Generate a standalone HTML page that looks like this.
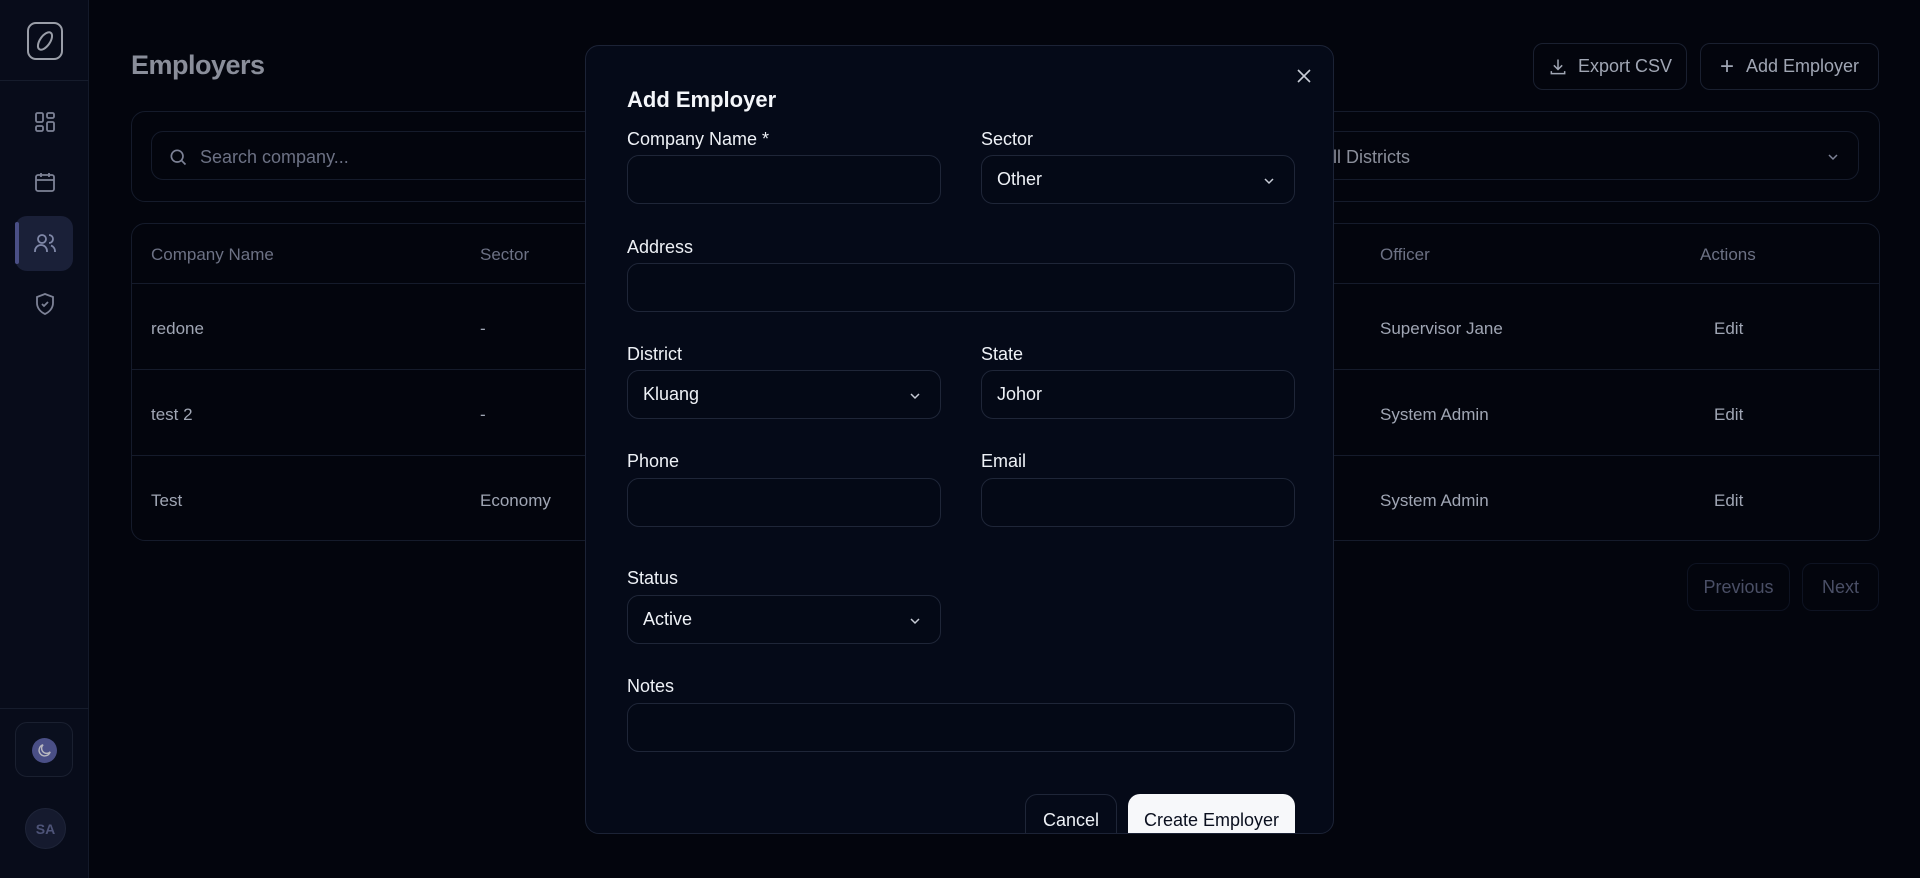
<!DOCTYPE html>
<html><head><meta charset="utf-8"><style>
*{box-sizing:border-box;margin:0;padding:0}
body{width:1920px;height:878px;overflow:hidden;background:#03050d;font-family:"Liberation Sans",sans-serif;position:relative;color:#9aa0b0}
.abs{position:absolute}
.side{left:0;top:0;width:89px;height:878px;background:#080c1a;border-right:1px solid #141a2a}
.hline{left:0;width:89px;height:1px;background:#161c2c}
.ico{position:absolute;left:33px;width:24px;height:24px}
.card{border:1px solid #151b2b;border-radius:14px}
.btn{border:1px solid #1a2030;border-radius:10px;display:flex;align-items:center;justify-content:center;font-size:18px;color:#a0a6b4}
.th{font-size:17px;color:#6c7184}
.td{font-size:17px;color:#a0a6b4}
.modal{left:585px;top:45px;width:749px;height:789px;background:#050a18;border:1px solid #1c2336;border-radius:14px;overflow:hidden}
.lbl{position:absolute;font-size:18px;color:#eef1f6}
.inp{position:absolute;height:49px;border:1px solid #1f2638;border-radius:12px;background:#040916;font-size:18px;color:#eef1f6;padding-left:15px;display:flex;align-items:center}
.chev{position:absolute;right:18px;top:18px}
</style></head><body>
<div class="abs side">
 <div class="abs" style="left:27px;top:22px;width:36px;height:38px;border:2px solid #9a9ea8;border-radius:9px"><svg width="32" height="34" viewBox="0 0 32 34"><ellipse cx="16" cy="17" rx="5" ry="10" transform="rotate(35 16 17)" fill="none" stroke="#9a9ea8" stroke-width="2"/></svg></div>
 <div class="abs hline" style="top:80px"></div>
 <svg class="ico" style="top:110px" viewBox="0 0 24 24" fill="none" stroke="#7d8296" stroke-width="1.8"><rect x="3" y="3" width="7" height="9" rx="1.5"/><rect x="14" y="3" width="7" height="5" rx="1.5"/><rect x="14" y="12" width="7" height="9" rx="1.5"/><rect x="3" y="16" width="7" height="5" rx="1.5"/></svg>
 <svg class="ico" style="top:170px" viewBox="0 0 24 24" fill="none" stroke="#7d8296" stroke-width="1.8"><rect x="3" y="5" width="18" height="16" rx="2"/><path d="M3 10h18M8 3v4M16 3v4"/></svg>
 <div class="abs" style="left:15px;top:216px;width:58px;height:55px;border-radius:12px;background:#1a2038"></div>
 <div class="abs" style="left:15px;top:222px;width:4px;height:42px;border-radius:2px;background:#4a4f86"></div>
 <svg class="ico" style="top:231px" viewBox="0 0 24 24" fill="none" stroke="#8088a8" stroke-width="1.8"><circle cx="9" cy="8" r="4"/><path d="M2 21v-1a6 6 0 0 1 12 0v1M16 4a4 4 0 0 1 0 8M22 21v-1a6 6 0 0 0-4-5.5"/></svg>
 <svg class="ico" style="top:292px" viewBox="0 0 24 24" fill="none" stroke="#7d8296" stroke-width="1.8"><path d="M12 2l8 3v6c0 5-3.5 9-8 11-4.5-2-8-6-8-11V5z"/><path d="M9 12l2 2 4-4"/></svg>
 <div class="abs hline" style="top:708px"></div>
 <div class="abs" style="left:15px;top:722px;width:58px;height:55px;border-radius:12px;border:1px solid #1a2030;background:#0a0f1e"></div>
 <div class="abs" style="left:32px;top:738px;width:25px;height:25px;border-radius:50%;background:#4a4f86"></div>
 <svg class="abs" style="left:36px;top:742px" width="17" height="17" viewBox="0 0 24 24" fill="none" stroke="#b8b8c0" stroke-width="2"><path d="M20 14A8 8 0 1 1 10 4a6 6 0 0 0 10 10z"/></svg>
 <div class="abs" style="left:25px;top:808px;width:41px;height:41px;border-radius:50%;background:#151a2e;border:1px solid #1e2438;color:#4e5478;font-size:14px;font-weight:bold;display:flex;align-items:center;justify-content:center">SA</div>
</div>
<div class="abs" style="left:131px;top:50px;font-size:27px;font-weight:bold;color:#8a8e9a;letter-spacing:-0.5px">Employers</div>
<div class="abs btn" style="left:1533px;top:43px;width:154px;height:47px"><svg width="20" height="20" viewBox="0 0 24 24" fill="none" stroke="#a0a6b4" stroke-width="1.8" style="margin-right:10px"><path d="M12 3v12M7 10l5 5 5-5M4 17v3h16v-3"/></svg>Export CSV</div>
<div class="abs btn" style="left:1700px;top:43px;width:179px;height:47px"><span style="font-size:24px;margin-right:12px">+</span>Add Employer</div>
<div class="abs card" style="left:131px;top:111px;width:1749px;height:91px"></div>
<div class="abs" style="left:151px;top:131px;width:600px;height:49px;border:1px solid #151b2b;border-radius:12px;display:flex;align-items:center;padding-left:16px;padding-top:3px;font-size:18px;color:#6c7184"><svg width="20" height="20" viewBox="0 0 24 24" fill="none" stroke="#7d8296" stroke-width="2" style="margin-right:12px"><circle cx="11" cy="11" r="7"/><path d="M16 16l5 5"/></svg>Search company...</div>
<div class="abs" style="left:1200px;top:131px;width:659px;height:49px;border:1px solid #151b2b;border-radius:12px;font-size:18px;color:#8a8e9a;display:flex;align-items:center;padding-left:120px;padding-top:3px">All Districts<svg class="chev" width="14" height="14" viewBox="0 0 14 14" fill="none" stroke="#7d8296" stroke-width="1.5"><path d="M3 5l4 4 4-4"/></svg></div>
<div class="abs card" style="left:131px;top:223px;width:1749px;height:318px"></div>
<div class="abs" style="left:131px;top:283px;width:1749px;height:1px;background:#151b2b"></div>
<div class="abs" style="left:131px;top:369px;width:1749px;height:1px;background:#151b2b"></div>
<div class="abs" style="left:131px;top:455px;width:1749px;height:1px;background:#151b2b"></div>
<div class="abs th" style="left:151px;top:245px">Company Name</div>
<div class="abs th" style="left:480px;top:245px">Sector</div>
<div class="abs th" style="left:1380px;top:245px">Officer</div>
<div class="abs th" style="left:1700px;top:245px">Actions</div>
<div class="abs td" style="left:151px;top:319px">redone</div><div class="abs td" style="left:480px;top:319px">-</div><div class="abs td" style="left:1380px;top:319px">Supervisor Jane</div><div class="abs td" style="left:1714px;top:319px">Edit</div>
<div class="abs td" style="left:151px;top:405px">test 2</div><div class="abs td" style="left:480px;top:405px">-</div><div class="abs td" style="left:1380px;top:405px">System Admin</div><div class="abs td" style="left:1714px;top:405px">Edit</div>
<div class="abs td" style="left:151px;top:491px">Test</div><div class="abs td" style="left:480px;top:491px">Economy</div><div class="abs td" style="left:1380px;top:491px">System Admin</div><div class="abs td" style="left:1714px;top:491px">Edit</div>
<div class="abs btn" style="left:1687px;top:563px;width:103px;height:48px;color:#4a4f66;border-color:#0e1322">Previous</div>
<div class="abs btn" style="left:1802px;top:563px;width:77px;height:48px;color:#4a4f66;border-color:#0e1322">Next</div>

<div class="abs modal">
 <svg class="abs" style="left:710px;top:22px" width="16" height="16" viewBox="0 0 16 16" stroke="#c8ccd6" stroke-width="1.6"><path d="M2 2l12 12M14 2L2 14"/></svg>
 <div class="abs" style="left:41px;top:41px;font-size:22px;font-weight:bold;color:#f4f6fa">Add Employer</div>
 <div class="lbl" style="left:41px;top:83px">Company Name *</div>
 <div class="lbl" style="left:395px;top:83px">Sector</div>
 <div class="inp" style="left:41px;top:109px;width:314px"></div>
 <div class="inp" style="left:395px;top:109px;width:314px">Other<svg class="chev" width="14" height="14" viewBox="0 0 14 14" fill="none" stroke="#c8ccd6" stroke-width="1.5"><path d="M3 5l4 4 4-4"/></svg></div>
 <div class="lbl" style="left:41px;top:191px">Address</div>
 <div class="inp" style="left:41px;top:217px;width:668px"></div>
 <div class="lbl" style="left:41px;top:298px">District</div>
 <div class="lbl" style="left:395px;top:298px">State</div>
 <div class="inp" style="left:41px;top:324px;width:314px">Kluang<svg class="chev" width="14" height="14" viewBox="0 0 14 14" fill="none" stroke="#c8ccd6" stroke-width="1.5"><path d="M3 5l4 4 4-4"/></svg></div>
 <div class="inp" style="left:395px;top:324px;width:314px">Johor</div>
 <div class="lbl" style="left:41px;top:405px">Phone</div>
 <div class="lbl" style="left:395px;top:405px">Email</div>
 <div class="inp" style="left:41px;top:432px;width:314px"></div>
 <div class="inp" style="left:395px;top:432px;width:314px"></div>
 <div class="lbl" style="left:41px;top:522px">Status</div>
 <div class="inp" style="left:41px;top:549px;width:314px">Active<svg class="chev" width="14" height="14" viewBox="0 0 14 14" fill="none" stroke="#c8ccd6" stroke-width="1.5"><path d="M3 5l4 4 4-4"/></svg></div>
 <div class="lbl" style="left:41px;top:630px">Notes</div>
 <div class="inp" style="left:41px;top:657px;width:668px"></div>
 <div class="abs" style="left:439px;top:748px;width:92px;height:52px;border:1px solid #1f2638;border-radius:12px;font-size:18px;color:#eef1f6;display:flex;align-items:center;justify-content:center">Cancel</div>
 <div class="abs" style="left:542px;top:748px;width:167px;height:52px;background:#f7f8fa;border-radius:12px;font-size:18px;color:#0a0f1e;display:flex;align-items:center;justify-content:center">Create Employer</div>
</div>
</body></html>
